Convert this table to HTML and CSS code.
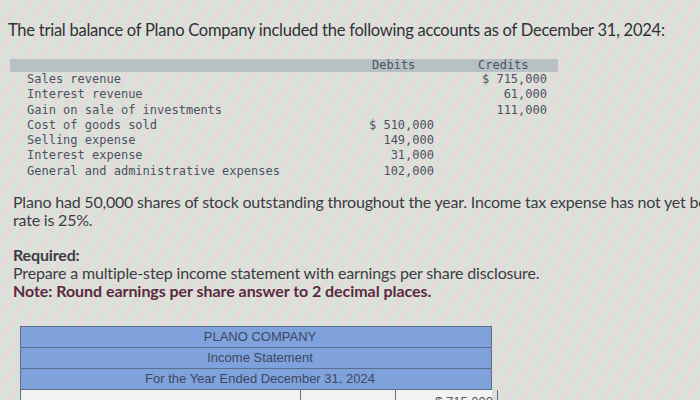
FILE: index.html
```html
<!DOCTYPE html>
<html lang="en">
<head>
<meta charset="utf-8">
<title>Plano Company</title>
<link rel="stylesheet" href="styles.css">
</head>
<body>
<div class="page">
  <p class="intro">The trial balance of Plano Company included the following accounts as of December 31, 2024:</p>

  <div class="tb">
    <div class="tb-head">
      <span></span>
      <span class="h-debit">Debits</span>
      <span class="h-credit">Credits</span>
    </div>
    <div class="tb-row"><span>Sales revenue</span><span></span><span class="num">$ 715,000</span></div>
    <div class="tb-row"><span>Interest revenue</span><span></span><span class="num">61,000</span></div>
    <div class="tb-row"><span>Gain on sale of investments</span><span></span><span class="num">111,000</span></div>
    <div class="tb-row"><span>Cost of goods sold</span><span class="num">$ 510,000</span><span></span></div>
    <div class="tb-row"><span>Selling expense</span><span class="num">149,000</span><span></span></div>
    <div class="tb-row"><span>Interest expense</span><span class="num">31,000</span><span></span></div>
    <div class="tb-row"><span>General and administrative expenses</span><span class="num">102,000</span><span></span></div>
  </div>

  <div class="para-clip">
    <p class="para">Plano had 50,000 shares of stock outstanding throughout the year. Income tax expense has not yet been recorded. The income tax rate is 25%.</p>
  </div>

  <div class="req">
    <p class="req-title">Required:</p>
    <p>Prepare a multiple-step income statement with earnings per share disclosure.</p>
    <p class="note">Note: Round earnings per share answer to 2 decimal places.</p>
  </div>

  <div class="stmt">
    <div class="stmt-h">PLANO COMPANY</div>
    <div class="stmt-h">Income Statement</div>
    <div class="stmt-h">For the Year Ended December 31, 2024</div>
    <div class="stmt-row">
      <div class="cell c1"></div>
      <div class="cell c2"></div>
      <div class="cell c3">$ 715,000</div>
    </div>
  </div>
</div>
</body>
</html>
```

FILE: styles.css
```css
html, body {
  margin: 0;
  padding: 0;
}
body {
  width: 700px;
  height: 400px;
  overflow: hidden;
  background-color: #e1e4de;
  background-image:
    repeating-linear-gradient(120deg, rgba(236, 200, 214, 0.35) 0 6px, rgba(200, 226, 206, 0.35) 6px 12px);
  color: #3b3d42;
  font-family: "Lato", "Liberation Sans", sans-serif;
}
.page {
  padding: 19px 0 0 0;
}
p { margin: 0; }

.intro {
  padding-left: 8px;
  font-size: 16.5px;
  line-height: 22px;
  letter-spacing: -0.25px;
  white-space: nowrap;
  color: #2f3136;
}

.tb {
  margin: 18px 0 0 10px;
  width: 548px;
  font-family: "DejaVu Sans Mono", "Liberation Mono", monospace;
  font-size: 12px;
  color: #4c5262;
}
.tb-head, .tb-row {
  display: grid;
  grid-template-columns: 327px 80px 113px;
  padding-left: 17px;
}
.tb-head {
  background: #b7c0c2;
  height: 13px;
  line-height: 13px;
}
.h-debit { padding-left: 18px; }
.h-credit { padding-left: 44px; }
.tb-row {
  line-height: 15.3px;
}
.num { text-align: right; }

.para-clip {
  margin: 14px 0 0 13px;
  width: 687px;
  overflow: hidden;
}
.para {
  width: 895px;
  font-size: 16px;
  line-height: 18px;
  letter-spacing: -0.2px;
}

.req {
  margin: 17px 0 0 13px;
  font-size: 16px;
  line-height: 18px;
  letter-spacing: -0.15px;
}
.req-title { font-weight: 700; }
.note { font-weight: 700; color: #5a2a40; letter-spacing: -0.05px; }

.stmt {
  margin: 26px 0 0 20px;
  width: 472px;
  font-family: "Liberation Sans", Arial, sans-serif;
  font-size: 13px;
  color: #3c4862;
}
.stmt-h {
  background: #7fa2dc;
  border: 1px solid #5d6d8c;
  height: 20px;
  line-height: 20px;
  text-align: center;
  margin-top: -1px;
  padding-left: 8px;
}
.stmt-h:first-child { margin-top: 0; }
.stmt-row {
  display: grid;
  grid-template-columns: 280px 95px 102px;
  background: #f2f3f1;
  border-left: 1px solid #5d6d8c;
  height: 24px;
}
.cell {
  border-right: 1px solid #5d6d8c;
  line-height: 24px;
  padding: 0 4px;
}
.c3 { text-align: right; color: #555; }
```
